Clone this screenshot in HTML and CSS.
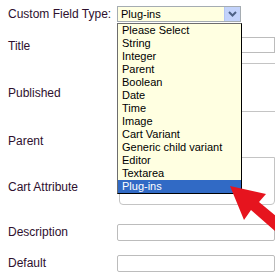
FILE: index.html
```html
<!DOCTYPE html>
<html>
<head>
<meta charset="utf-8">
<link rel="stylesheet" href="styles.css">
</head>
<body>
<div class="form">
  <div class="row row-type">
    <span class="label">Custom Field Type:</span>
    <div class="select">
      <span class="select-value">Plug-ins</span>
      <span class="select-btn"><svg width="9" height="6" viewBox="0 0 9 6"><path d="M1 1 L4.5 4.5 L8 1" fill="none" stroke="#4d6185" stroke-width="2"/></svg></span>
    </div>
  </div>
  <div class="row row-title"><span class="label">Title</span><div class="input"></div></div>
  <div class="row row-tall row-pub"><span class="label label-tall">Published</span><div class="box"></div></div>
  <div class="row row-tall row-parent"><span class="label label-tall">Parent</span><div class="box"></div></div>
  <div class="row row-tall row-cart"><span class="label label-tall">Cart Attribute</span><div class="box box-last"></div></div>
  <div class="row row-desc"><span class="label">Description</span><div class="input input-tall"></div></div>
  <div class="row row-default"><span class="label">Default</span><div class="input input-tall"></div></div>
</div>
<ul class="dropdown">
  <li>Please Select</li>
  <li>String</li>
  <li>Integer</li>
  <li>Parent</li>
  <li>Boolean</li>
  <li>Date</li>
  <li>Time</li>
  <li>Image</li>
  <li>Cart Variant</li>
  <li>Generic child variant</li>
  <li>Editor</li>
  <li>Textarea</li>
  <li class="selected">Plug-ins</li>
</ul>
<svg class="arrow" width="275" height="275" viewBox="0 0 275 275">
  <polygon points="230,186 266,194 259,202 300,236 292,246 251,210 244,220" fill="#e6141e"/>
</svg>
</body>
</html>
```
FILE: styles.css
```css
html, body {
  margin: 0;
  padding: 0;
  overflow: hidden;
  background: #fff;
}
body {
  width: 275px;
  height: 275px;
  position: relative;
  font-family: "Liberation Sans", Arial, sans-serif;
}
.form {
  display: flex;
  flex-direction: column;
  padding: 6px 0 0 8px;
}
.row {
  display: flex;
  align-items: flex-start;
}
.label {
  width: 109px;
  flex: none;
  font-size: 12px;
  line-height: 16px;
  color: #2e102e;
  white-space: nowrap;
}
.row-title { margin-top: 15px; }
.row-title .label { padding-top: 1px; }
.row-pub { margin-top: 9px; height: 48px; }
.row-parent { height: 46px; }
.row-cart { height: 48px; }
.label-tall { padding-top: 22px; }
.row-desc { margin-top: 19px; }
.row-default { margin-top: 14px; }
.row-desc .label, .row-default .label { line-height: 17px; }

.select {
  box-sizing: border-box;
  width: 124px;
  height: 16px;
  border: 1px solid #a5acb2;
  background: #ffffe1;
  display: flex;
  align-items: center;
  justify-content: space-between;
  padding-left: 3px;
  font-size: 11px;
  color: #000;
}
.select-btn {
  width: 15px;
  height: 14px;
  background: #c3d3fb;
  border-left: 1px solid #b4c6f3;
  display: flex;
  align-items: center;
  justify-content: center;
}
.input {
  box-sizing: border-box;
  width: 170px;
  height: 16px;
  border: 1px solid #bcbcbc;
  background: #fff;
}
.input-tall {
  height: 17px;
  border-radius: 2px;
}
.box {
  box-sizing: border-box;
  width: 170px;
  height: 100%;
  border-top: 1px solid #c4c4c4;
  border-left: 1px solid #c4c4c4;
}
.box-last {
  margin-left: 2px;
  border: 1px solid #c4c4c4;
  border-radius: 0 0 4px 4px;
}
.dropdown {
  position: absolute;
  left: 117px;
  top: 23px;
  width: 125px;
  box-sizing: border-box;
  margin: 0;
  padding: 0;
  list-style: none;
  border: 1px solid #000;
  border-left-color: #6d6d6d;
  border-top-color: #6d6d6d;
  background: #ffffe1;
  font-size: 11px;
  line-height: 13px;
  color: #000;
}
.dropdown li {
  padding-left: 4px;
  height: 13px;
  white-space: nowrap;
}
.dropdown li.selected {
  background: #316ac5;
  color: #fff;
}
.arrow {
  position: absolute;
  left: 0;
  top: 0;
  pointer-events: none;
}
```
